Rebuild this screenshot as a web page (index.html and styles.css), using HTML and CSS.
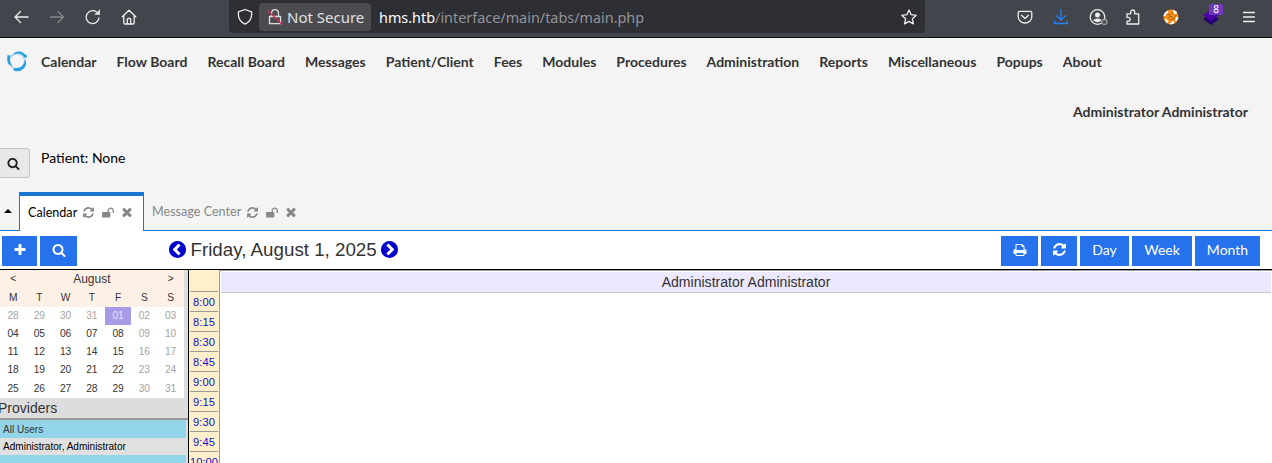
FILE: index.html
```html
<!DOCTYPE html>
<html lang="en">
<head>
<meta charset="utf-8">
<title>OpenEMR</title>
<link rel="stylesheet" href="styles.css">
</head>
<body>
<svg class="defs" width="0" height="0">
<symbol id="search" viewBox="0 0 1792 1792"><path d="M1216 832q0-185-131.500-316.500t-316.500-131.500-316.500 131.500-131.500 316.500 131.500 316.500 316.500 131.500 316.500-131.500 131.500-316.500zm512 832q0 52-38 90t-90 38q-54 0-90-38l-343-342q-179 124-399 124-143 0-273.500-55.500t-225-150-150-225-55.500-273.500 55.500-273.500 150-225 225-150 273.500-55.500 273.500 55.500 225 150 150 225 55.500 273.500q0 220-124 399l343 343q37 37 37 90z"/></symbol>
<symbol id="plus" viewBox="0 0 1792 1792"><path d="M1600 736v192q0 40-28 68t-68 28h-416v416q0 40-28 68t-68 28h-192q-40 0-68-28t-28-68v-416h-416q-40 0-68-28t-28-68v-192q0-40 28-68t68-28h416v-416q0-40 28-68t68-28h192q40 0 68 28t28 68v416h416q40 0 68 28t28 68z"/></symbol>
<symbol id="refresh" viewBox="128 128 1536 1536"><path d="M1639 1056q0 5-1 7-64 268-268 434.500t-478 166.500q-146 0-282.500-55t-243.500-157l-129 129q-19 19-45 19t-45-19-19-45v-448q0-26 19-45t45-19h448q26 0 45 19t19 45-19 45l-137 137q71 66 161 102t187 36q134 0 250-65t186-179q11-17 53-117 8-23 30-23h192q13 0 22.500 9.500t9.500 22.500zm25-800v448q0 26-19 45t-45 19h-448q-26 0-45-19t-19-45 19-45l138-138q-148-137-349-137-134 0-250 65t-186 179q-11 17-53 117-8 23-30 23h-199q-13 0-22.500-9.500t-9.500-22.500v-7q65-268 270-434.500t480-166.500q146 0 284 55.500t245 156.500l130-129q19-19 45-19t45 19 19 45z"/></symbol>
<symbol id="times" viewBox="256 256 1280 1408"><path d="M1490 1322q0 40-28 68l-136 136q-28 28-68 28t-68-28l-294-294-294 294q-28 28-68 28t-68-28l-136-136q-28-28-28-68t28-68l294-294-294-294q-28-28-28-68t28-68l136-136q28-28 68-28t68 28l294 294 294-294q28-28 68-28t68 28l136 136q28 28 28 68t-28 68l-294 294 294 294q28 28 28 68z"/></symbol>
<symbol id="unlock" viewBox="64 64 1664 1536"><path d="M1728 576v256q0 26-19 45t-45 19h-64q-26 0-45-19t-19-45v-256q0-106-75-181t-181-75-181 75-75 181v192h96q40 0 68 28t28 68v576q0 40-28 68t-68 28h-960q-40 0-68-28t-28-68v-576q0-40 28-68t68-28h672v-192q0-185 131.500-316.500t316.500-131.500 316.500 131.500 131.500 316.500z"/></symbol>
<symbol id="chev" viewBox="128 128 1536 1536"><path d="M1037 1395l102-102q19-19 19-45t-19-45l-307-307 307-307q19-19 19-45t-19-45l-102-102q-19-19-45-19t-45 19l-454 454q-19 19-19 45t19 45l454 454q19 19 45 19t45-19zm627-499q0 209-103 385.500t-279.500 279.500-385.500 103-385.500-103-279.500-279.500-103-385.500 103-385.500 279.500-279.500 385.500-103 385.500 103 279.500 279.500 103 385.500z"/></symbol>
<symbol id="print" viewBox="0 0 1792 1792"><path d="M448 1536h896v-256h-896v256zm0-640h896v-384h-160q-40 0-68-28t-28-68v-160h-640v640zm1152 64q0-26-19-45t-45-19-45 19-19 45 19 45 45 19 45-19 19-45zm128 0v416q0 13-9.500 22.500t-22.500 9.500h-224v160q0 40-28 68t-68 28h-960q-40 0-68-28t-28-68v-160h-224q-13 0-22.500-9.500t-9.500-22.500v-416q0-79 56.500-135.500t135.500-56.500h64v-544q0-40 28-68t68-28h672q40 0 88 20t76 48l152 152q28 28 48 76t20 88v256h64q79 0 135.500 56.500t56.500 135.500z"/></symbol>
</svg>

<header class="browser">
  <div class="nav-buttons">
    <svg class="line" viewBox="0 0 16 16"><path d="M15 8H2M7.500 2.500L2 8 7.500 13.500"/></svg>
    <svg class="line dim" viewBox="0 0 16 16"><path d="M1.500 8H14.500M9 2.500L14.500 8 9 13.500"/></svg>
    <svg class="line" viewBox="0 0 16 16"><path d="M14 8.800A6.400 6.400 0 1 1 11.500 3"/><path class="solid" d="M10 5.500h4.700V1z"/></svg>
    <svg class="line" viewBox="0 0 16 16"><path d="M1.200 7.800L8 1.300l6.800 6.500M2.800 6.500v7.200q0 1.300 1.300 1.300h7.800q1.300 0 1.300-1.300V6.500M6.300 14.500v-4q0-1 1-1h1.400q1 0 1 1v4"/></svg>
  </div>
  <div class="urlbar">
    <svg class="line shield" viewBox="0 0 16 16"><path d="M8 1L14.600 3.400V6.500Q14.300 12.500 8 15.700 1.700 12.500 1.400 6.500V3.400z"/></svg>
    <div class="insecure">
      <svg class="line" viewBox="0 0 16 16"><path d="M2.500 8h11v7.200h-11zM4.500 8V5Q4.700 1.200 8 1.200T11.500 5v3"/><path class="strike" d="M1.200 2.500L14.800 15.700"/></svg>
      <span>Not Secure</span>
    </div>
    <div class="url"><b>hms.htb</b>/interface/main/tabs/main.php</div>
    <svg class="line star" viewBox="0 0 16 16"><path d="M8 1l2.100 4.700 5.100.6-3.800 3.500 1 5.100L8 12.400l-4.400 2.500 1-5.100L.8 6.300l5.100-.6z"/></svg>
  </div>
  <div class="extensions">
    <svg class="line" viewBox="0 0 16 16"><path d="M2.500 2.300h11q1.300 0 1.300 1.300V7.700a6.800 6.300 0 0 1-13.600 0V3.600q0-1.300 1.300-1.300zM4.500 6.200L8 9.500l3.500-3.300"/></svg>
    <svg class="line blue" viewBox="0 0 16 16"><path d="M8 .7v10.500M3.500 6.700L8 11.100l4.500-4.400M1.700 12v2.500h12.600V12"/></svg>
    <svg class="line account" viewBox="0 0 19 16"><circle cx="8.500" cy="8" r="7.300"/><circle class="solid" cx="8.500" cy="6" r="2.300"/><path class="solid" d="M4.500 11.300Q5.300 9.700 8.500 9.700t4 1.600Q10.500 13 8.500 13t-4-1.700z"/><circle class="status" cx="15.400" cy="13" r="2.500"/></svg>
    <svg class="line" viewBox="0 0 16 16"><path d="M2 7V4.800h3.700V3a2 2 0 0 1 4 0v1.800h4v10.200H2v-2.800h1.300a1.900 1.900 0 0 0 0-3.800H2z"/></svg>
    <svg class="fox" viewBox="0 0 16 16"><circle cx="8" cy="8" r="7.500" fill="#f39019"/><path d="M.8 7L2 4 5 2 4 5zM10 1l4 2.500-2 1.500zM2 10l3 2-1 2zM10 12l1 2-4 1zM13 8l2 1-2 3z" fill="#fff" stroke="#fff" stroke-width="1"/><path d="M3 5l4 1M10 3L8 5M5 9l3-2 2 2M13 6l-2 4-4 1" stroke="#b15b08" stroke-width="1" fill="none"/></svg>
    <div class="foxy"><svg viewBox="0 0 16 16"><path d="M0 10l8-5 8 5-8 6z" fill="#20006f"/><path d="M0 6l8-5 8 5-8 6z" fill="#4c00a8"/></svg><span>8</span></div>
    <svg class="line burger" viewBox="0 0 16 16"><path d="M2.500 3.500h11M2.500 8h11M2.500 12.500h11"/></svg>
  </div>
</header>

<section class="top">
  <nav class="menu">
    <svg class="logo" viewBox="0 0 22 22"><circle cx="11" cy="11.300" r="7.600" fill="none" stroke="#8dcaec" stroke-width="1.200"/><g fill="#2a9fe0"><path d="M7 4.500Q9 1.200 13 1.400T19.500 5L20.800 4.800 20.600 8 18.500 7.500Q15.500 3 10.500 3.400z"/><path d="M1.500 5L3.800 5.400 4.600 4.500Q2.500 10 6.200 16Q1 14.500 1.200 9z"/><path d="M19.200 9.500Q21.700 14.500 17.800 18.500T8.300 20.800L7.200 19.500 8.500 18Q17.500 19 19.200 9.500z"/></g></svg>
    <span>Calendar</span><span>Flow Board</span><span>Recall Board</span><span>Messages</span><span>Patient/Client</span><span>Fees</span><span>Modules</span><span>Procedures</span><span>Administration</span><span>Reports</span><span>Miscellaneous</span><span>Popups</span><span>About</span>
  </nav>
  <div class="user">Administrator Administrator</div>
  <div class="patient"><button class="find"><svg><use href="#search"/></svg></button><span>Patient: None</span></div>
  <div class="tabs">
    <div class="caret"></div>
    <div class="tab active"><span>Calendar</span><svg><use href="#refresh"/></svg><svg class="lock"><use href="#unlock"/></svg><svg class="close"><use href="#times"/></svg></div>
    <div class="tab"><span>Message Center</span><svg><use href="#refresh"/></svg><svg class="lock"><use href="#unlock"/></svg><svg class="close"><use href="#times"/></svg></div>
  </div>
</section>

<section class="toolbar">
  <button class="btn add"><svg><use href="#plus"/></svg></button>
  <button class="btn seek"><svg><use href="#search"/></svg></button>
  <div class="date"><svg><use href="#chev"/></svg><span>Friday, August 1, 2025</span><svg class="flip"><use href="#chev"/></svg></div>
  <div class="views">
    <button class="btn print"><svg><use href="#print"/></svg></button>
    <button class="btn reload"><svg><use href="#refresh"/></svg></button>
    <button class="btn day">Day</button>
    <button class="btn week">Week</button>
    <button class="btn month">Month</button>
  </div>
</section>

<main class="content">
  <aside class="side">
    <div class="cal">
      <div class="cal-title"><span>&lt;</span><strong>August</strong><span>&gt;</span></div>
      <div class="week-row head"><span>M</span><span>T</span><span>W</span><span>T</span><span>F</span><span>S</span><span>S</span></div>
      <div class="week-row"><i>28</i><i>29</i><i>30</i><i>31</i><em>01</em><i>02</i><i>03</i></div>
      <div class="week-row"><span>04</span><span>05</span><span>06</span><span>07</span><span>08</span><i>09</i><i>10</i></div>
      <div class="week-row"><span>11</span><span>12</span><span>13</span><span>14</span><span>15</span><i>16</i><i>17</i></div>
      <div class="week-row"><span>18</span><span>19</span><span>20</span><span>21</span><span>22</span><i>23</i><i>24</i></div>
      <div class="week-row"><span>25</span><span>26</span><span>27</span><span>28</span><span>29</span><i>30</i><i>31</i></div>
    </div>
    <div class="prov-title">Providers</div>
    <div class="prov all">All Users</div>
    <div class="prov">Administrator, Administrator</div>
    <div class="prov all"></div>
  </aside>
  <div class="times">
    <div class="slot blank"></div>
    <div class="slot">8:00</div><div class="slot">8:15</div><div class="slot">8:30</div><div class="slot">8:45</div><div class="slot">9:00</div><div class="slot">9:15</div><div class="slot">9:30</div><div class="slot">9:45</div><div class="slot">10:00</div>
  </div>
  <div class="schedule"><div class="provider">Administrator Administrator</div></div>
</main>
</body>
</html>
```
FILE: styles.css
```css
* { box-sizing: border-box; }
body { margin: 0; height: 463px; overflow: hidden; display: flex; flex-direction: column; background: #fff; font-family: Lato, sans-serif; color: #333; }
svg { display: block; flex: none; fill: currentColor; }
.defs { position: absolute; }
button { border: 0; padding: 0; font: inherit; color: inherit; display: flex; align-items: center; justify-content: center; }

.browser { height: 38px; flex: none; background: #42454c; border-bottom: 1px solid #0c0c0d; display: flex; color: #eeeef0; font-family: "Noto Sans", sans-serif; }
.browser .line { fill: none; stroke: currentColor; stroke-width: 1.3; stroke-linejoin: round; stroke-linecap: round; }
.browser .line .solid { fill: currentColor; stroke-width: .5; }
.nav-buttons { width: 229px; padding: 9px 0 0 13px; display: flex; gap: 20px; }
.nav-buttons svg, .extensions > svg { width: 16px; height: 16px; }
.browser .dim { color: #85878c; }
.urlbar { width: 696px; height: 33px; background: #2e2f34; border-radius: 0 0 4px 4px; display: flex; align-items: center; padding-left: 8px; }
.shield { width: 16px; height: 17px; margin-right: 6px; }
.insecure { width: 112px; height: 28px; border-radius: 4px; background: #4b4c50; display: flex; align-items: center; padding-left: 8px; gap: 4px; font-size: 15px; white-space: nowrap; color: #e0e0e2; }
.insecure svg { width: 16px; height: 17px; }
.browser .strike { stroke: #e22850; }
.url { margin-left: 8px; padding-top: 2px; flex: 1; font-size: 14.400px; color: #929398; white-space: nowrap; }
.url b { font-weight: 400; color: #fbfbfe; }
.star { width: 16px; height: 16px; margin-right: 8px; }
.extensions { flex: 1; display: flex; padding: 9px 0 0 92px; gap: 20px; }
.browser .blue { color: #2383ff; }
.extensions > .account { width: 19px; margin-right: -3px; }
.browser .status { fill: #42454c; stroke: #9c9da1; }
.extensions > .fox { margin-left: 2px; }
.foxy { position: relative; width: 17px; height: 17px; margin: 0 0 0 4px; }
.foxy svg { width: 16px; height: 16px; }
.foxy span { position: absolute; left: 6px; top: -5px; width: 14px; height: 11px; background: #7139bb; border-radius: 1px; font-size: 10px; line-height: 11px; text-align: center; color: #fff; }
.extensions > .burger { margin-left: 1px; }

.top { height: 193px; flex: none; background: #f4f4f4; display: flex; flex-direction: column; }
.menu { height: 48px; display: flex; align-items: center; gap: 20.040px; font-size: 14px; font-weight: 700; white-space: nowrap; padding: 0 0 2px 6px; }
.logo { width: 22px; height: 22px; margin: -1px -7px 0 0; }
.user { height: 51px; padding-right: 24px; text-align: right; font-size: 14px; line-height: 52px; font-weight: 700; }
.patient { height: 55px; padding-top: 11px; display: flex; color: #000; font-size: 14px; }
.find { width: 30px; height: 30px; background: #e8e8e8; border: 1px solid #c8c8c8; border-left: 0; border-radius: 0 3px 3px 0; color: #222; }
.find svg { width: 13px; height: 13px; margin-right: 2px; }
.patient span { margin-left: 11px; line-height: 20px; }
.tabs { height: 39px; display: flex; border-bottom: 1px solid #1976d2; font-size: 12.600px; }
.caret { width: 19px; padding: 17px 0 0 4px; }
.caret::before { content: ""; display: block; width: 0; border: 4px solid transparent; border-top: 0; border-bottom: 4px solid #000; }
.tab { height: 39px; display: flex; align-items: center; padding: 1px 8px 0; color: #888; }
.tab.active { width: 125px; background: #fff; border: 1px solid #1976d2; border-top-width: 4px; border-bottom: 0; padding-top: 0; padding-bottom: 2px; }
.tab span { padding-bottom: 1px; }
.tab.active span { color: #000; }
.tab svg { width: 11px; height: 11px; margin-left: 6px; }
.tab .lock { width: 12px; margin-left: 8px; }
.tab .close { width: 10px; margin-left: 8px; }

.toolbar { height: 39px; flex: none; border-bottom: 1px solid #000; padding: 5px 12px 3px 2px; display: flex; }
.btn { height: 30px; background: #2672ec; color: #fff; font-size: 14px; padding-bottom: 3px; }
.btn svg { width: 14px; height: 14px; }
.add { width: 35px; margin-right: 3px; }
.seek { width: 37px; }
.date { margin-left: 92px; height: 27px; display: flex; align-items: center; gap: 5px; font: 18.750px "Liberation Sans", Arial, sans-serif; white-space: nowrap; }
.date span { margin: 0 -.5px; }
.date svg { width: 17px; height: 17px; color: #0000cd; }
.flip { transform: scaleX(-1); }
.views { margin-left: auto; display: flex; gap: 3px; }
.print { width: 37px; } .reload { width: 36px; } .day { width: 49px; } .week { width: 60px; } .month { width: 65px; }
.reload svg { width: 13px; height: 13px; }

.content { flex: 1; min-height: 0; display: flex; font-family: "Liberation Sans", Arial, sans-serif; }
.side { width: 189px; border-right: 1px solid #000; background: #ddd; }
.cal { width: 184px; height: 128px; background: #fff; font-size: 10.200px; }
.cal-title, .week-row { display: grid; grid-template-columns: repeat(7, 26.250px); height: 18.250px; line-height: 18px; text-align: center; }
.cal-title { background: #fff0e6; line-height: 18px; }
.cal-title strong { grid-column: 2 / 7; font-size: 12px; font-weight: 400; }
.week-row.head { background: #fff0e6; line-height: 19px; }
.week-row i, .week-row em { font-style: normal; color: #a4a4a4; }
.week-row em { height: 18px; background: #a89ae6; color: #e9e5ff; }
.prov-title { height: 22px; border-bottom: 2px solid #999; font-size: 14px; line-height: 20px; text-indent: -2px; }
.prov { width: 186px; height: 17px; padding-left: 3px; background: #e0e0e0; color: #000; font-size: 10.050px; line-height: 17px; }
.prov.all { height: 18px; line-height: 19px; background: #93d5e8; color: #333; }
.times { width: 31px; background: #fff0cc; border-right: 1px solid #999; padding: 0 1px; font-size: 11.200px; overflow: hidden; }
.slot { height: 20px; line-height: 21px; text-align: center; color: #1010c8; border-bottom: 1px solid #999; }
.slot.blank { height: 22px; }
.schedule { flex: 1; border-top: 1px solid #999; padding: 1px 1px 0; }
.provider { height: 21px; line-height: 21px; background: #ece8ff; border-bottom: 1px solid #ccc; text-align: center; font-size: 14.050px; }
```
